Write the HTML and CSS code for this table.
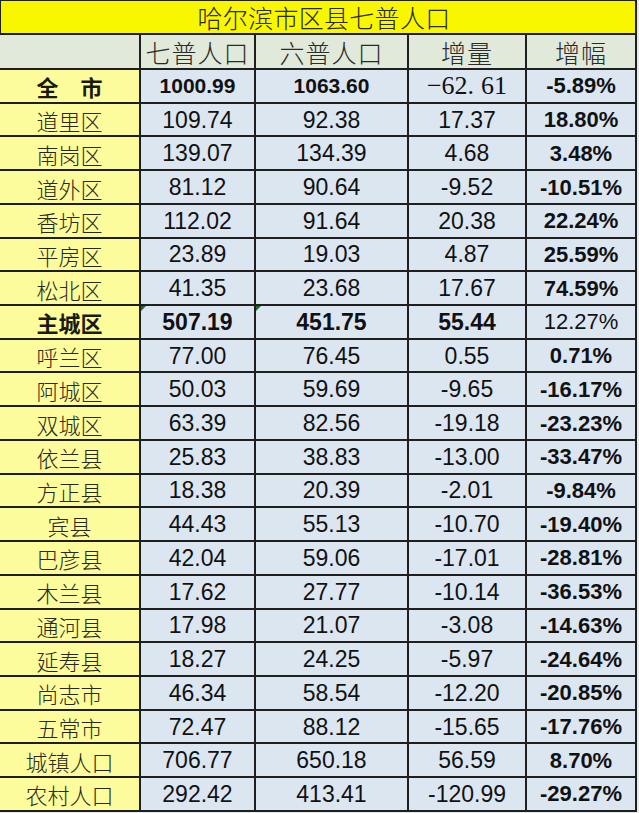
FILE: index.html
```html
<!DOCTYPE html>
<html lang="zh-CN">
<head>
<meta charset="utf-8">
<title>哈尔滨市区县七普人口</title>
<link rel="stylesheet" href="styles.css">
</head>
<body>
<div class="sheet">
  <div class="title">哈尔滨市区县七普人口</div>
  <div class="grid">
    <div class="cell head"></div>
    <div class="cell head">七普人口</div>
    <div class="cell head">六普人口</div>
    <div class="cell head">增量</div>
    <div class="cell head">增幅</div>

    <div class="cell name strong">全　市</div>
    <div class="cell num b sm">1000.99</div>
    <div class="cell num b sm">1063.60</div>
    <div class="cell num serif">−62<span class="dot">.</span>61</div>
    <div class="cell num b pct">-5.89%</div>

    <div class="cell name">道里区</div>
    <div class="cell num">109.74</div>
    <div class="cell num">92.38</div>
    <div class="cell num">17.37</div>
    <div class="cell num b pct">18.80%</div>

    <div class="cell name">南岗区</div>
    <div class="cell num">139.07</div>
    <div class="cell num">134.39</div>
    <div class="cell num">4.68</div>
    <div class="cell num b pct">3.48%</div>

    <div class="cell name">道外区</div>
    <div class="cell num">81.12</div>
    <div class="cell num">90.64</div>
    <div class="cell num">-9.52</div>
    <div class="cell num b pct">-10.51%</div>

    <div class="cell name">香坊区</div>
    <div class="cell num">112.02</div>
    <div class="cell num">91.64</div>
    <div class="cell num">20.38</div>
    <div class="cell num b pct">22.24%</div>

    <div class="cell name">平房区</div>
    <div class="cell num">23.89</div>
    <div class="cell num">19.03</div>
    <div class="cell num">4.87</div>
    <div class="cell num b pct">25.59%</div>

    <div class="cell name">松北区</div>
    <div class="cell num">41.35</div>
    <div class="cell num">23.68</div>
    <div class="cell num">17.67</div>
    <div class="cell num b pct">74.59%</div>

    <div class="cell name strong">主城区</div>
    <div class="cell num b tri">507.19</div>
    <div class="cell num b tri">451.75</div>
    <div class="cell num b">55.44</div>
    <div class="cell num pct">12.27%</div>

    <div class="cell name">呼兰区</div>
    <div class="cell num">77.00</div>
    <div class="cell num">76.45</div>
    <div class="cell num">0.55</div>
    <div class="cell num b pct">0.71%</div>

    <div class="cell name">阿城区</div>
    <div class="cell num">50.03</div>
    <div class="cell num">59.69</div>
    <div class="cell num">-9.65</div>
    <div class="cell num b pct">-16.17%</div>

    <div class="cell name">双城区</div>
    <div class="cell num">63.39</div>
    <div class="cell num">82.56</div>
    <div class="cell num">-19.18</div>
    <div class="cell num b pct">-23.23%</div>

    <div class="cell name">依兰县</div>
    <div class="cell num">25.83</div>
    <div class="cell num">38.83</div>
    <div class="cell num">-13.00</div>
    <div class="cell num b pct">-33.47%</div>

    <div class="cell name">方正县</div>
    <div class="cell num">18.38</div>
    <div class="cell num">20.39</div>
    <div class="cell num">-2.01</div>
    <div class="cell num b pct">-9.84%</div>

    <div class="cell name">宾县</div>
    <div class="cell num">44.43</div>
    <div class="cell num">55.13</div>
    <div class="cell num">-10.70</div>
    <div class="cell num b pct">-19.40%</div>

    <div class="cell name">巴彦县</div>
    <div class="cell num">42.04</div>
    <div class="cell num">59.06</div>
    <div class="cell num">-17.01</div>
    <div class="cell num b pct">-28.81%</div>

    <div class="cell name">木兰县</div>
    <div class="cell num">17.62</div>
    <div class="cell num">27.77</div>
    <div class="cell num">-10.14</div>
    <div class="cell num b pct">-36.53%</div>

    <div class="cell name">通河县</div>
    <div class="cell num">17.98</div>
    <div class="cell num">21.07</div>
    <div class="cell num">-3.08</div>
    <div class="cell num b pct">-14.63%</div>

    <div class="cell name">延寿县</div>
    <div class="cell num">18.27</div>
    <div class="cell num">24.25</div>
    <div class="cell num">-5.97</div>
    <div class="cell num b pct">-24.64%</div>

    <div class="cell name">尚志市</div>
    <div class="cell num">46.34</div>
    <div class="cell num">58.54</div>
    <div class="cell num">-12.20</div>
    <div class="cell num b pct">-20.85%</div>

    <div class="cell name">五常市</div>
    <div class="cell num">72.47</div>
    <div class="cell num">88.12</div>
    <div class="cell num">-15.65</div>
    <div class="cell num b pct">-17.76%</div>

    <div class="cell name">城镇人口</div>
    <div class="cell num">706.77</div>
    <div class="cell num">650.18</div>
    <div class="cell num">56.59</div>
    <div class="cell num b pct">8.70%</div>

    <div class="cell name">农村人口</div>
    <div class="cell num">292.42</div>
    <div class="cell num">413.41</div>
    <div class="cell num">-120.99</div>
    <div class="cell num b pct">-29.27%</div>
  </div>
</div>
</body>
</html>
```

FILE: styles.css
```css
html, body {
  margin: 0;
  padding: 0;
}
body {
  background: #e4e9ea;
  width: 639px;
  height: 813px;
  overflow: hidden;
}
.sheet {
  width: 637px;
}
.title {
  height: 35px;
  box-sizing: border-box;
  background: #f9f700;
  border-top: 1px solid #222;
  border-left: 1px solid #222;
  border-right: 2px solid #222;
  border-bottom: 2px solid #1c1c1c;
  display: flex;
  align-items: center;
  justify-content: center;
  font-family: "Noto Sans CJK SC", sans-serif;
  font-weight: 300;
  font-size: 25px;
  color: #2a2a1a;
  letter-spacing: 0.3px;
  padding-left: 12px;
}
.grid {
  display: grid;
  grid-template-columns: 141px 115px 153px 118px 110px;
  grid-template-rows: 35px;
  grid-auto-rows: 33.727px;
}
.cell {
  box-sizing: border-box;
  border-right: 2px solid #1f1f1f;
  border-bottom: 2px solid #1f1f1f;
  display: flex;
  align-items: center;
  justify-content: center;
  background: #dce6f1;
  color: #111;
  white-space: nowrap;
  padding-top: 1px;
}
.head {
  background: #e0e9da;
  font-family: "Noto Sans CJK SC", sans-serif;
  font-weight: 300;
  font-size: 25px;
  color: #2a2a2a;
  letter-spacing: 1px;
}
.name {
  background: #fdfc9c;
  font-family: "Noto Sans CJK SC", sans-serif;
  font-weight: 300;
  font-size: 22px;
  color: #29291a;
}
.name.strong {
  font-weight: 700;
  color: #1a1a10;
}
.num {
  font-family: "Liberation Sans", Arial, sans-serif;
  font-size: 23px;
}
.num.pct {
  font-size: 22px;
}
.num.b {
  font-weight: 700;
}
.num.sm {
  font-size: 21px;
}
.num.serif {
  font-family: "Liberation Serif", "Times New Roman", serif;
  font-size: 26px;
}
.dot {
  padding-right: 7px;
}
.tri {
  position: relative;
}
.tri::before {
  content: "";
  position: absolute;
  top: 0;
  left: 0;
  border-top: 5px solid #1d6b2c;
  border-right: 5px solid transparent;
}
```
